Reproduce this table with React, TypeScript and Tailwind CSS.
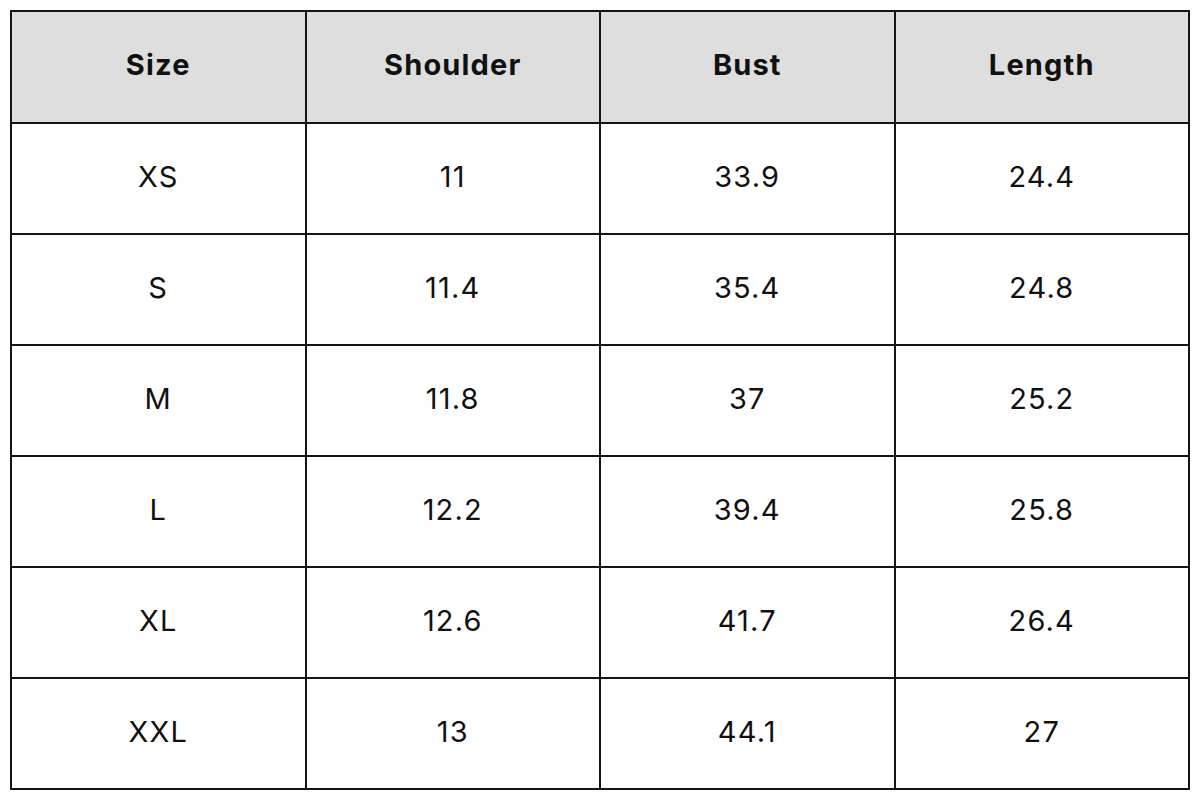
const headers = ["Size", "Shoulder", "Bust", "Length"];

const rows = [
  ["XS", "11", "33.9", "24.4"],
  ["S", "11.4", "35.4", "24.8"],
  ["M", "11.8", "37", "25.2"],
  ["L", "12.2", "39.4", "25.8"],
  ["XL", "12.6", "41.7", "26.4"],
  ["XXL", "13", "44.1", "27"],
];

export default function App() {
  return (
    <div className="w-[1200px] h-[800px] bg-white p-[10px]" style={{ fontFamily: "Inter, 'Open Sans', sans-serif" }}>
      <div className="grid h-[780px] grid-cols-4 grid-rows-[110px_repeat(6,109px)] gap-[2px] bg-[#141414] p-[2px] text-[29px] tracking-[0.04em] text-[#111]">
        {headers.map((h) => (
          <div key={h} className="flex items-center justify-center bg-[#dedede] pb-[4px] font-bold">
            {h}
          </div>
        ))}
        {rows.map((r) =>
          r.map((c, i) => (
            <div key={r[0] + i} className="flex items-center justify-center bg-white pb-[4px]">
              {c}
            </div>
          )),
        )}
      </div>
    </div>
  );
}
